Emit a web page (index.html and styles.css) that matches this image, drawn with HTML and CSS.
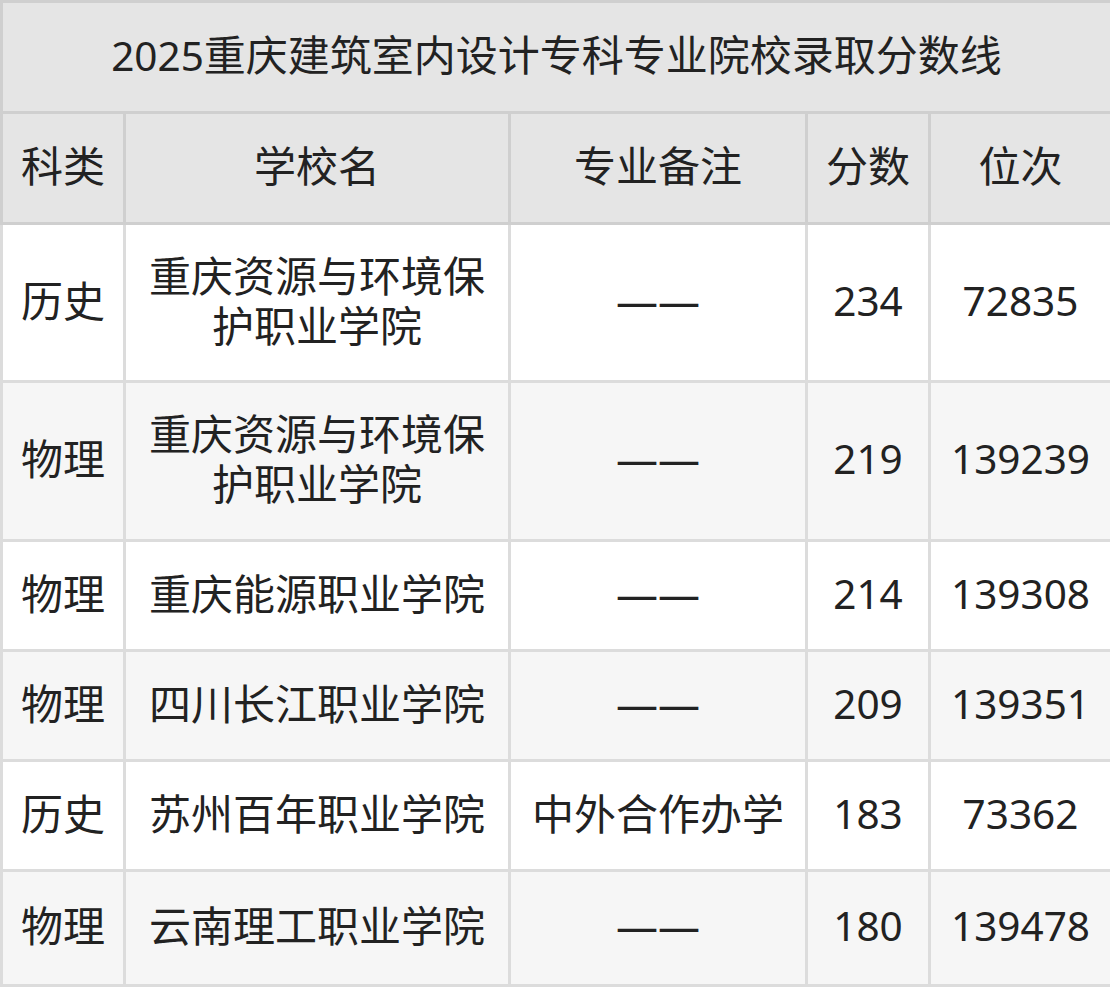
FILE: index.html
```html
<!DOCTYPE html>
<html lang="zh-CN">
<head>
<meta charset="utf-8">
<title>2025重庆建筑室内设计专科专业院校录取分数线</title>
<link rel="stylesheet" href="styles.css">
</head>
<body>
<table class="score-table">
  <colgroup>
    <col class="c-type">
    <col class="c-school">
    <col class="c-note">
    <col class="c-score">
    <col class="c-rank">
  </colgroup>
  <thead>
    <tr class="title-row"><th colspan="5"><span class="num">2025</span>重庆建筑室内设计专科专业院校录取分数线</th></tr>
    <tr class="head-row"><th>科类</th><th>学校名</th><th>专业备注</th><th>分数</th><th>位次</th></tr>
  </thead>
  <tbody>
    <tr class="row tall odd"><td>历史</td><td>重庆资源与环境保护职业学院</td><td>——</td><td class="num">234</td><td class="num">72835</td></tr>
    <tr class="row tall even"><td>物理</td><td>重庆资源与环境保护职业学院</td><td>——</td><td class="num">219</td><td class="num">139239</td></tr>
    <tr class="row odd"><td>物理</td><td>重庆能源职业学院</td><td>——</td><td class="num">214</td><td class="num">139308</td></tr>
    <tr class="row even"><td>物理</td><td>四川长江职业学院</td><td>——</td><td class="num">209</td><td class="num">139351</td></tr>
    <tr class="row odd"><td>历史</td><td>苏州百年职业学院</td><td>中外合作办学</td><td class="num">183</td><td class="num">73362</td></tr>
    <tr class="row even last"><td>物理</td><td>云南理工职业学院</td><td>——</td><td class="num">180</td><td class="num">139478</td></tr>
  </tbody>
</table>
</body>
</html>
```

FILE: styles.css
```css
html, body {
  margin: 0;
  padding: 0;
  background: #ffffff;
}

.score-table {
  width: 1110px;
  border-collapse: collapse;
  table-layout: fixed;
  font-family: "Noto Sans", "Noto Sans CJK SC", sans-serif;
  font-size: 42px;
  line-height: 50px;
  color: #222222;
}

.c-type { width: 123px; }
.c-school { width: 385px; }
.c-note { width: 297px; }
.c-score { width: 123px; }
.c-rank { width: 182px; }

.score-table th,
.score-table td {
  text-align: center;
  vertical-align: middle;
  padding: 0 18px 4px;
  font-weight: normal;
  white-space: normal;
}

.score-table .num {
  font-size: 40.5px;
}

.score-table th {
  background: #e5e5e5;
  border: 3px solid #cfcfcf;
}

.title-row th {
  height: 104px;
  padding: 0 0 4px;
}

.head-row th {
  height: 103px;
  padding: 0 4px 5px;
}

.score-table td {
  border: 3px solid #dcdcdc;
  height: 103px;
}

.row.tall td {
  height: 151px;
}

.row.tall.even td {
  height: 152px;
}

.row.last td {
  height: 108px;
}

.row td:first-child,
.row td:nth-child(4),
.row td:nth-child(5) {
  padding: 0 2px 4px;
}

.odd td { background: #ffffff; }
.even td { background: #f6f6f6; }
```
